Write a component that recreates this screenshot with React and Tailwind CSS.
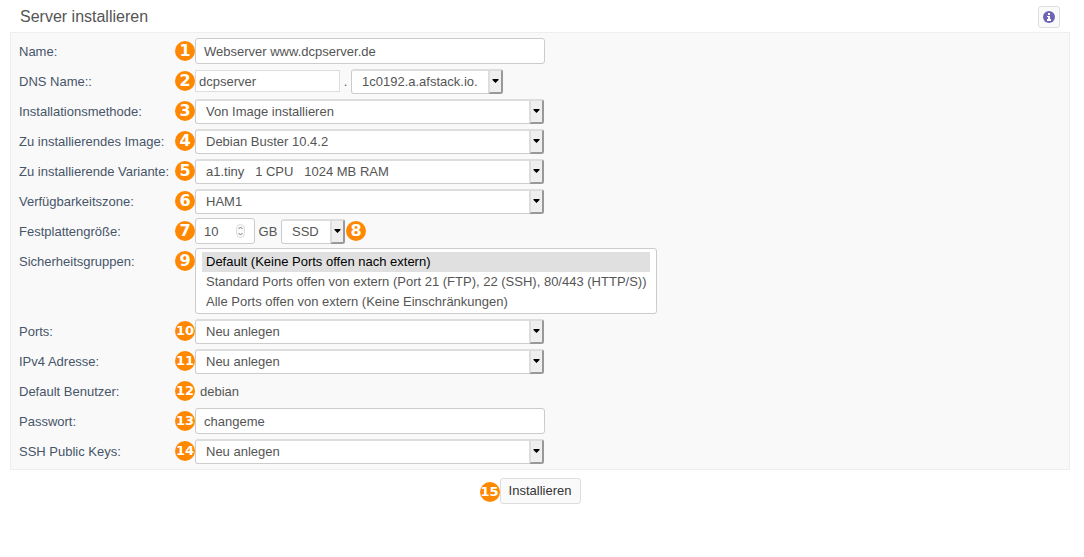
import React from 'react';
import clsx from 'clsx';

const FIELD = 'rounded-[3px] border border-[#ccc] bg-white text-[13px] text-[#555]';
const OPTION = 'h-5 px-1 pt-[2px] pb-0';

function Badge({ children, className }) {
  const wide = String(children).length > 1;
  return (
    <span
      className={clsx(
        'flex h-5 w-5 shrink-0 items-center justify-center rounded-full bg-[#ff8800] font-bold leading-5 text-white select-none',
        "font-['DejaVu_Sans',sans-serif]",
        wide ? 'text-[13px]' : 'text-[16px]',
        className
      )}
    >
      {children}
    </span>
  );
}

function Select({ className, options, ...props }) {
  return (
    <span className={clsx('relative inline-flex', className)}>
      <select
        {...props}
        className={clsx(FIELD, 'h-[25px] w-full appearance-none border-t-2 border-t-[#ddd] pr-5 pl-[10px] outline-none')}
      >
        {options.map((option) => (
          <option key={option}>{option}</option>
        ))}
      </select>
      <span className="pointer-events-none absolute top-0 right-0 bottom-0 flex w-[15px] items-center justify-center rounded-r-[3px] border-2 border-t-[#ddd] border-r-[#999] border-b-[#999] border-l-[#ddd] bg-[#efefef]">
        <svg width="7" height="4" viewBox="0 0 7 4" aria-hidden="true">
          <path d="M0.500 0h6v1L3.500 4L0.500 1z" fill="#000" />
        </svg>
      </span>
    </span>
  );
}

// One form line: label on the left, numbered marker and field on the right
function Row({ step, label, htmlFor, tall, children }) {
  const Label = htmlFor ? 'label' : 'span';
  return (
    <div className={clsx('flex', tall ? 'items-start py-[2px]' : 'h-[30px] items-center')}>
      <Label
        htmlFor={htmlFor}
        className={clsx('w-[156px] shrink-0 whitespace-nowrap text-[#475569]', tall ? 'pt-1' : 'pt-[2px]')}
      >
        {label}
      </Label>
      <Badge className={tall && 'mt-[3px]'}>{step}</Badge>
      {children}
    </div>
  );
}

export default function App() {
  return (
    <form
      className="pr-[14px] pl-[10px] font-['Liberation_Sans',Arial,sans-serif] text-[13px] leading-5 text-[#555]"
      onSubmit={(e) => e.preventDefault()}
    >
      <header className="flex h-8 items-center justify-between px-[10px] pt-[2px]">
        <h1 className="text-[16px]">Server installieren</h1>
        <button
          type="button"
          aria-label="Info"
          className="flex h-[22px] w-[22px] items-center justify-center rounded-[3px] border border-[#ddd] bg-[#fafafa]"
        >
          <svg width="12" height="12" viewBox="0 0 12 12" aria-hidden="true">
            <circle cx="6" cy="6" r="6" fill="#6c63b5" />
            <path d="M5 2h2v2H5zM4 5h3v3h1v2H4V8h1V6H4z" fill="#fff" />
          </svg>
        </button>
      </header>

      <section className="border border-[#eee] bg-[#f9f9f9] px-2 py-[3px]">
        <Row step={1} label="Name:" htmlFor="name">
          <input id="name" type="text" defaultValue="Webserver www.dcpserver.de" className={clsx(FIELD, 'h-[26px] w-[350px] px-2')} />
        </Row>
        <Row step={2} label="DNS Name::" htmlFor="dns">
          <input id="dns" type="text" defaultValue="dcpserver" className="h-[22px] w-[145px] border border-[#ddd] bg-white px-[3px]" />
          <span className="w-[11px] pt-[2px] text-center">.</span>
          <Select className="w-[152px]" aria-label="Domain" options={['1c0192.a.afstack.io.']} />
        </Row>
        <Row step={3} label="Installationsmethode:" htmlFor="method">
          <Select id="method" className="w-[349px]" options={['Von Image installieren']} />
        </Row>
        <Row step={4} label="Zu installierendes Image:" htmlFor="image">
          <Select id="image" className="w-[349px]" options={['Debian Buster 10.4.2']} />
        </Row>
        <Row step={5} label="Zu installierende Variante:" htmlFor="flavor">
          <Select id="flavor" className="w-[349px]" options={['a1.tiny\u00a0\u00a0 1 CPU\u00a0\u00a0 1024 MB RAM']} />
        </Row>
        <Row step={6} label="Verfügbarkeitszone:" htmlFor="zone">
          <Select id="zone" className="w-[349px]" options={['HAM1']} />
        </Row>
        <Row step={7} label="Festplattengröße:" htmlFor="disk">
          <span className="relative inline-flex">
            <input
              id="disk"
              type="number"
              defaultValue={10}
              className={clsx(FIELD, 'h-[26px] w-[60px] [appearance:textfield] px-2')}
            />
            <svg className="pointer-events-none absolute top-[6px] right-[10px]" width="9" height="14" viewBox="0 0 9 14" fill="none" aria-hidden="true">
              <rect x="0.5" y="0.5" width="8" height="13" rx="4" fill="#fafafa" stroke="#ddd" />
              <path d="M2.500 5L4.500 3l2 2M2.500 9l2 2 2-2" stroke="#777" />
            </svg>
          </span>
          <span className="w-[26px] pt-[2px] text-center">GB</span>
          <Select className="w-[64px]" aria-label="Festplattentyp" options={['SSD']} />
          <Badge className="ml-px">8</Badge>
        </Row>
        <Row step={9} label="Sicherheitsgruppen:" htmlFor="groups" tall>
          <select
            id="groups"
            multiple
            size={3}
            defaultValue={['default']}
            className={clsx(FIELD, 'h-[66px] w-[462px] overflow-hidden px-[6px] py-[3px] outline-none')}
          >
            <option value="default" className={clsx(OPTION, 'checked:bg-[#e0e0e0] checked:bg-[linear-gradient(#e0e0e0,#e0e0e0)] checked:text-black')}>
              Default (Keine Ports offen nach extern)
            </option>
            <option value="standard" className={OPTION}>
              Standard Ports offen von extern (Port 21 (FTP), 22 (SSH), 80/443 (HTTP/S))
            </option>
            <option value="all" className={OPTION}>
              Alle Ports offen von extern (Keine Einschränkungen)
            </option>
          </select>
        </Row>
        <Row step={10} label="Ports:" htmlFor="ports">
          <Select id="ports" className="w-[349px]" options={['Neu anlegen']} />
        </Row>
        <Row step={11} label="IPv4 Adresse:" htmlFor="ipv4">
          <Select id="ipv4" className="w-[349px]" options={['Neu anlegen']} />
        </Row>
        <Row step={12} label="Default Benutzer:">
          <span className="pt-[2px] pl-[5px]">debian</span>
        </Row>
        <Row step={13} label="Passwort:" htmlFor="password">
          <input id="password" type="text" defaultValue="changeme" className={clsx(FIELD, 'h-[26px] w-[350px] px-2')} />
        </Row>
        <Row step={14} label="SSH Public Keys:" htmlFor="keys">
          <Select id="keys" className="w-[349px]" options={['Neu anlegen']} />
        </Row>
      </section>

      <footer className="flex justify-center pt-2">
        <div className="relative">
          <Badge className="absolute top-1 right-full">15</Badge>
          <button type="submit" className="h-[26px] w-[81px] rounded-[3px] border border-[#ddd] bg-[#fafafa] text-[#333]">
            Installieren
          </button>
        </div>
      </footer>
    </form>
  );
}
